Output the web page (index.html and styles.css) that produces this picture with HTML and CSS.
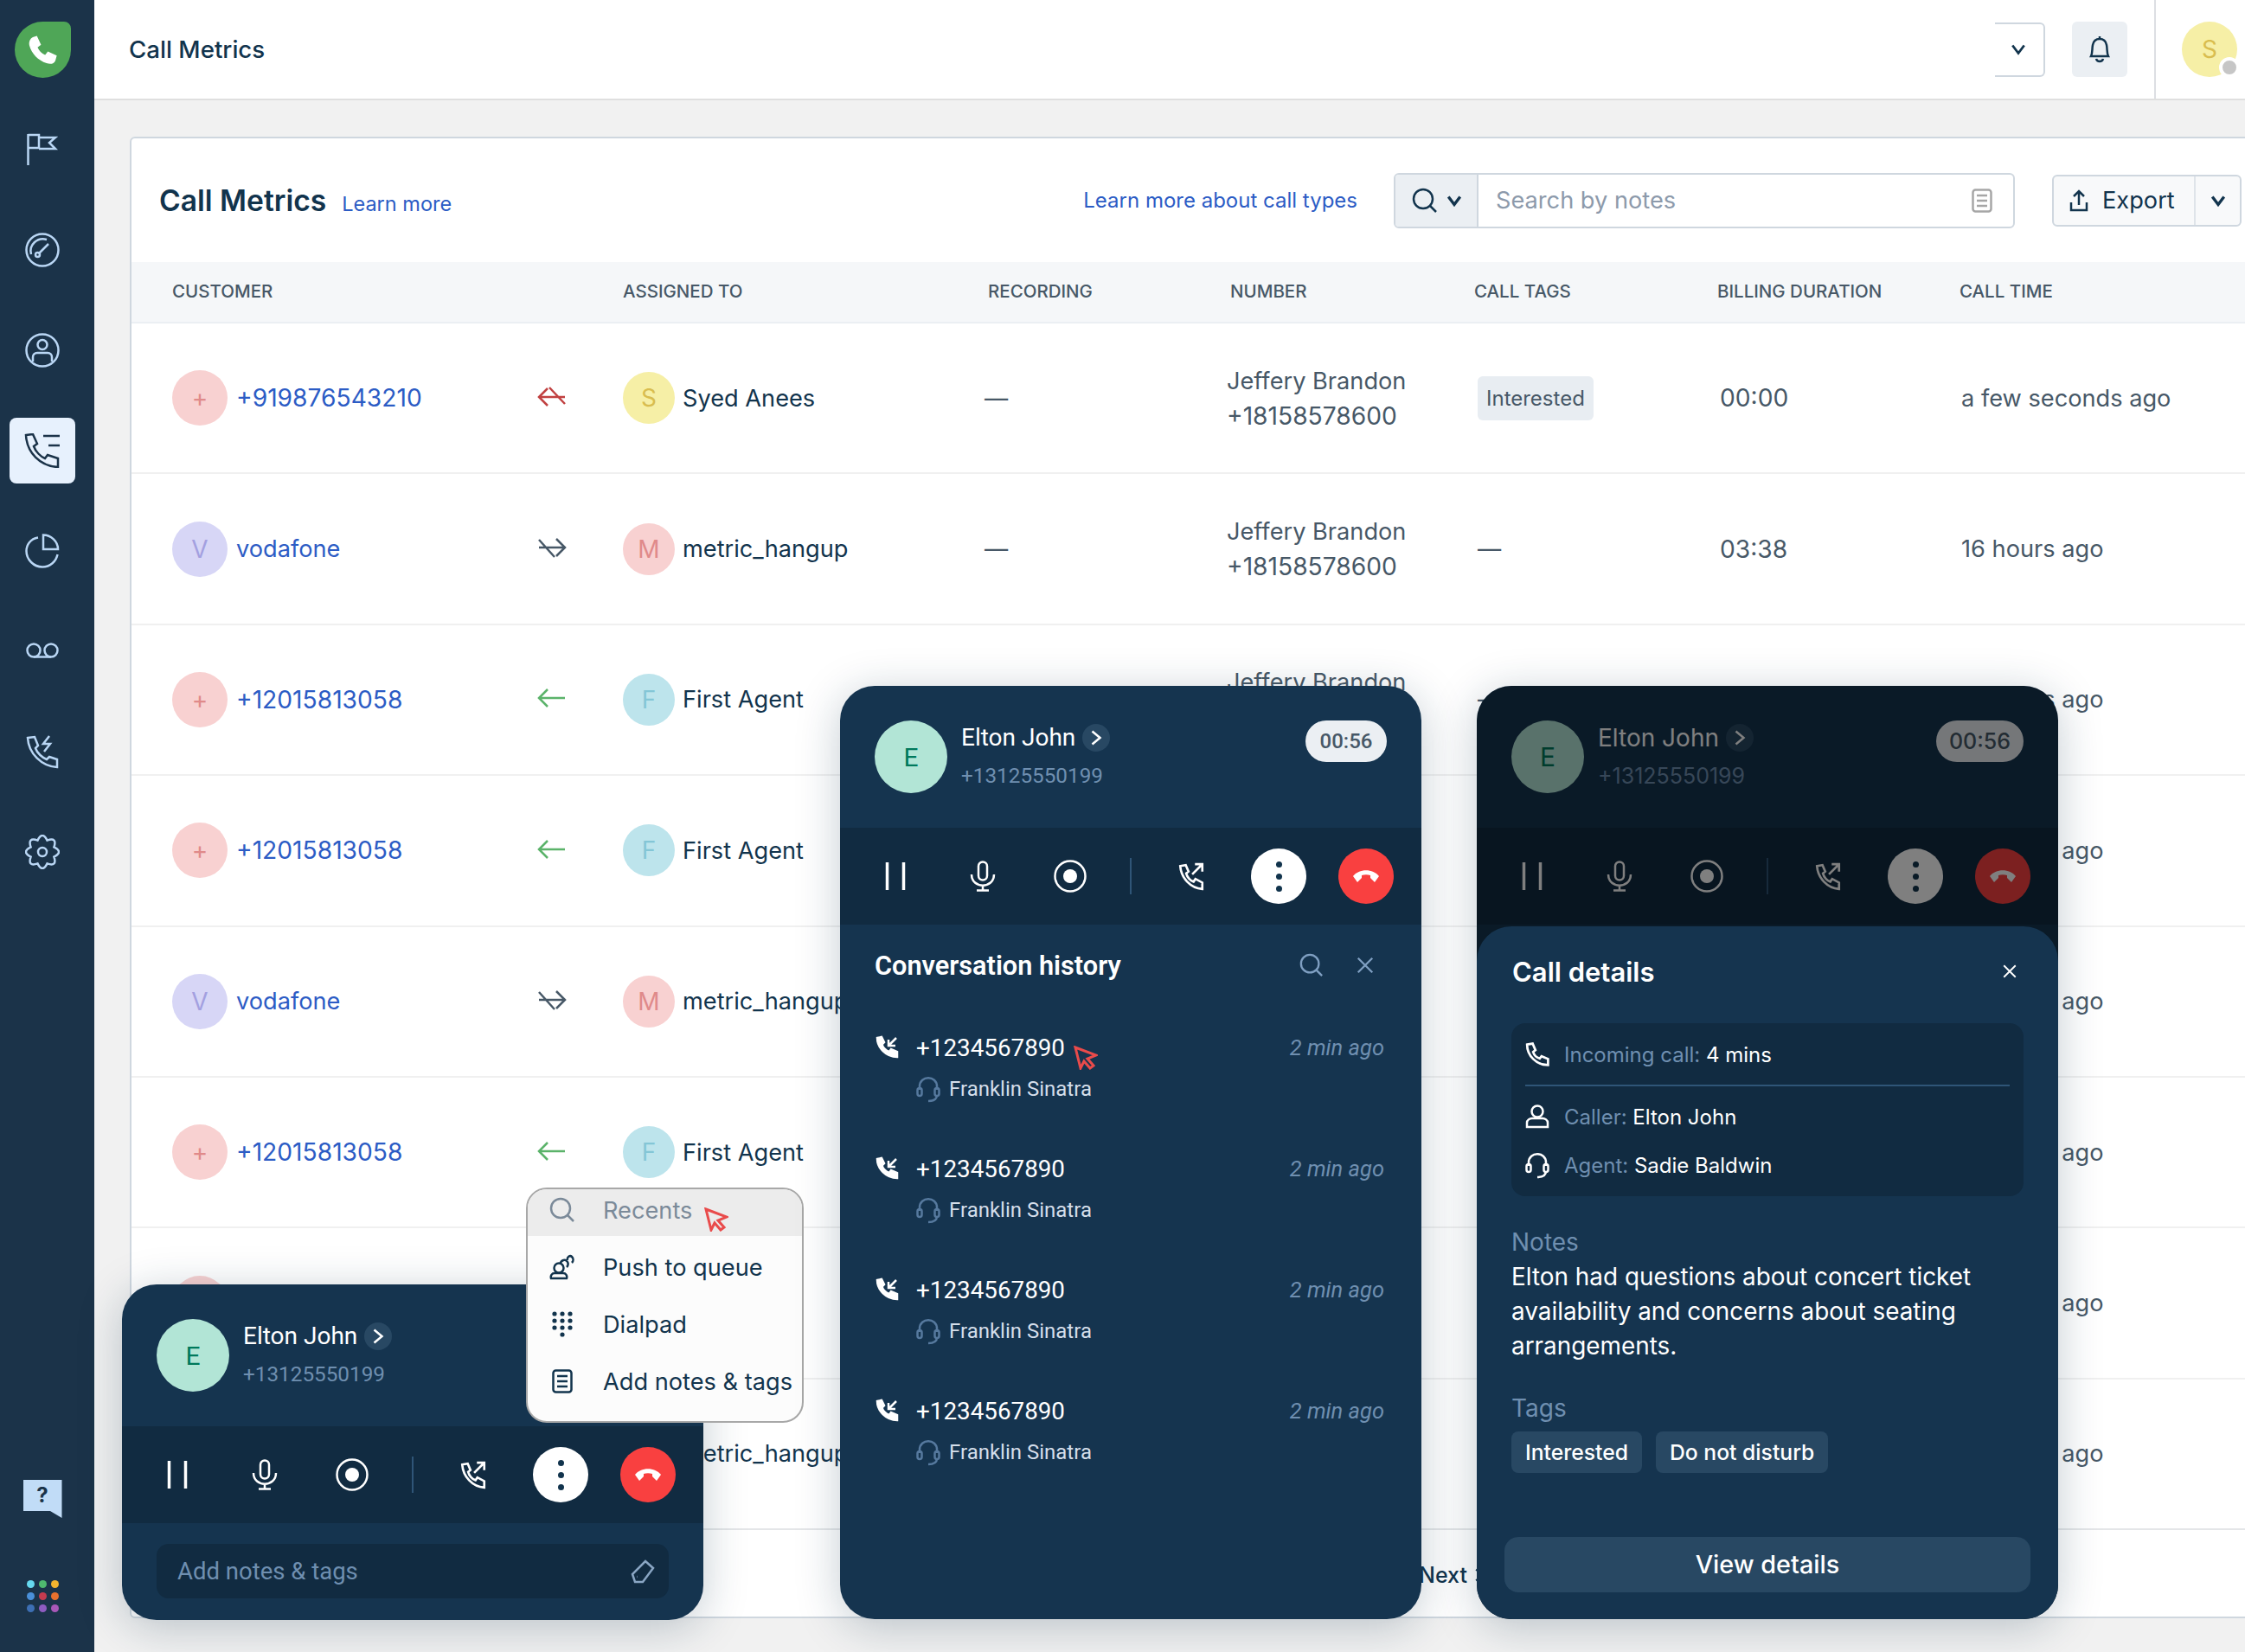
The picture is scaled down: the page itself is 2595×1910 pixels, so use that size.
FILE: index.html
```html
<!DOCTYPE html>
<html lang="en">
<head>
    <meta charset="UTF-8">
    <title>Call Metrics</title>
    <link rel="stylesheet" href="styles.css">
</head>
<body>
    <svg class="sprite" xmlns="http://www.w3.org/2000/svg">
        <symbol id="i-handset" viewBox="0 0 26 26"><path d="M2 2.500 8 1.500 11 8.500 8.500 10.500C9.500 13.500 12.500 16.500 15.500 17.500L17.500 15 24.500 18V24.500C12 24.500 2 14.500 2 2.500Z"/></symbol>
        <symbol id="i-transfer" viewBox="0 0 28 32"><path d="M2 5 8 4 11 11 8.500 13C9.500 17 13 21 16.500 22L18.500 19 26 23V30C13 29 3 18 2 5Z"/><path d="M15 14 25 4M18 3H26V11"/></symbol>
        <symbol id="i-incoming" viewBox="0 0 28 28"><path d="M3 3 8 2 11 8 8.500 10.500C9.500 14 13 18 17 19L19 16 26 19V25C13 25 3 14 3 3Z" fill="currentColor"/><path d="M25 3 16 12M16 5V12H24"/></symbol>
        <symbol id="i-hangup" viewBox="0 0 32 20"><path d="M1 10C8 1 24 1 31 10L26 17 21 12V9C18 8 14 8 11 9V12L6 17Z" fill="currentColor" stroke="none"/></symbol>
        <symbol id="i-mic" viewBox="0 0 30 36"><rect x="10" y="1.500" width="10" height="21" rx="5"/><path d="M2 16C2 33 28 33 28 16M15 28V34M8 34.500H22"/></symbol>
        <symbol id="i-search" viewBox="0 0 30 30"><circle cx="13" cy="13" r="11"/><path d="M21 21 28 28"/></symbol>
        <symbol id="i-close" viewBox="0 0 24 24"><path d="M3 3 21 21M21 3 3 21"/></symbol>
        <symbol id="i-chevron" viewBox="0 0 16 16"><path d="M2 4 8 12 14 4"/></symbol>
        <symbol id="i-headset" viewBox="0 0 28 32"><path d="M4 17V13C4 0 24 0 24 13V17M24 23C24 28 21 30 14 30"/><rect x="1.500" y="15" width="5" height="9" rx="2.500"/><rect x="21.500" y="15" width="5" height="9" rx="2.500"/></symbol>
        <symbol id="i-person" viewBox="0 0 28 28"><circle cx="14" cy="8" r="6.500"/><path d="M2 26V21C2 18 5 16 8 16H20C23 16 26 18 26 21V26Z"/></symbol>
        <symbol id="i-notes" viewBox="0 0 24 28"><rect x="1.500" y="1.500" width="21" height="25" rx="3"/><path d="M6 8H18M6 14H18M6 20H18"/></symbol>
        <symbol id="i-missed" viewBox="0 0 34 24"><path d="M32 12H2M12 2 2 12 12 22M14 1 32 20"/></symbol>
        <symbol id="i-outgoing" viewBox="0 0 34 24"><path d="M2 12H32M22 2 32 12 22 22M2 3 20 23"/></symbol>
        <symbol id="i-incoming-arrow" viewBox="0 0 34 24"><path d="M32 12H2M12 2 2 12 12 22"/></symbol>
        <symbol id="i-right" viewBox="0 0 14 18"><path d="M2.500 1.500 11.500 9 2.500 16.500"/></symbol>
    </svg>

    <div class="app">
        <aside class="sidebar">
            <div class="logo">
                <svg width="38" height="38" viewBox="0 0 24 24"><path d="M5 2.500 8 1.500 11 8 8.500 10C9.500 12.500 11.500 14.500 14 15.500L16 13 22.500 16 21.500 19.500C20.500 22 18 22.500 15 21.500 9 19.500 4 14.500 2.500 8.500 2 6 3 3.500 5 2.500Z"/></svg>
            </div>
            <nav class="nav">
                <a class="nav-item"><svg width="36" height="38" viewBox="0 0 36 38"><path d="M1.500 1V37M1.500 2H14V17H1.500M14 5H33L26 11 33 18H14"/></svg></a>
                <a class="nav-item"><svg width="40" height="40" viewBox="0 0 40 40"><circle cx="20" cy="20" r="18.500"/><path d="M7 25C4 14 14 5 25 8"/><path d="M15.500 24.500 27 13"/><circle cx="14.500" cy="25.500" r="2.500"/></svg></a>
                <a class="nav-item"><svg width="40" height="40" viewBox="0 0 40 40"><circle cx="20" cy="20" r="18.500"/><circle cx="20" cy="13.500" r="5.500"/><path d="M9 33V28C9 25 11 23 14 23H26C29 23 31 25 31 28V33"/></svg></a>
                <a class="nav-item active"><svg width="42" height="40" viewBox="0 0 42 40"><path d="M2 2 10 1 15 12 11 15C13 21 19 27 24 29L27 25 39 29V39C18 38 3 22 2 2Z"/><path d="M22 3H41M28 14H41"/></svg></a>
                <a class="nav-item"><svg width="40" height="40" viewBox="0 0 40 40"><path d="M15 4.500C6 6 1.500 13 1.500 20 1.500 30 10 38.500 20 38.500 29 38.500 36 32 37.500 24"/><path d="M21 1.500V18H38C38 9 30 1.500 21 1.500Z"/></svg></a>
                <a class="nav-item"><svg width="38" height="20" viewBox="0 0 38 20"><circle cx="9" cy="9" r="7.500"/><circle cx="29" cy="9" r="7.500"/><path d="M9 16.500H29"/></svg></a>
                <a class="nav-item"><svg width="38" height="40" viewBox="0 0 38 40"><path d="M2 4 10 3 14 13 11 16C13 22 19 27 24 29L27 26 36 29V38C18 37 3 22 2 4Z"/><path d="M27 2 20 11H28L21 20"/></svg></a>
                <a class="nav-item"><svg width="40" height="40" viewBox="0 0 40 40"><circle cx="20" cy="20" r="5"/><path d="M33.400 14.450Q44.600 20 33.400 25.550 37.400 37.400 25.550 33.400 20 44.600 14.450 33.400 2.600 37.400 6.600 25.550-4.600 20 6.600 14.450 2.600 2.600 14.450 6.600 20-4.600 25.550 6.600 37.400 2.600 33.400 14.450Z"/></svg></a>
            </nav>
            <div class="help">?</div>
            <div class="apps">
                <span class="dot teal"></span><span class="dot green"></span><span class="dot yellow"></span>
                <span class="dot blue"></span><span class="dot red"></span><span class="dot orange"></span>
                <span class="dot navy"></span><span class="dot violet"></span><span class="dot plum"></span>
            </div>
        </aside>

        <main class="main">
            <header class="topbar">
                <div class="page-title">Call Metrics</div>
                <div class="topbar-right">
                    <div class="drop-stub"><svg class="stroke-dark" width="18" height="18"><use href="#i-chevron"/></svg></div>
                    <div class="bell">
                        <svg class="stroke-dark" width="30" height="32" viewBox="0 0 30 32"><path d="M15 1V4M5 24C7 20 6 16 7 11 8 6 11 4 15 4S22 6 23 11C24 16 23 20 25 24Z"/><path d="M11 27C12 31 18 31 19 27"/></svg>
                    </div>
                    <div class="me">
                        <div class="avatar me-avatar yellow-tint">S<span class="status"></span></div>
                    </div>
                </div>
            </header>

            <section class="content">
                <div class="card">
                    <div class="card-head">
                        <h2>Call Metrics</h2>
                        <a class="link learn">Learn more</a>
                        <a class="link types">Learn more about call types</a>
                        <div class="search">
                            <div class="search-type">
                                <svg class="stroke-dark" width="30" height="30"><use href="#i-search"/></svg>
                                <svg class="stroke-dark thick" width="18" height="18"><use href="#i-chevron"/></svg>
                            </div>
                            <div class="search-box">
                                <span>Search by notes</span>
                                <svg class="stroke-grey" width="24" height="28"><use href="#i-notes"/></svg>
                            </div>
                        </div>
                        <div class="export">
                            <svg class="stroke-dark" width="22" height="26" viewBox="0 0 22 26"><path d="M11 18V2M5 8 11 2 17 8M2 15V24H20V15"/></svg>
                            <span class="export-label">Export</span>
                            <span class="export-more"><svg class="stroke-dark thick" width="18" height="18"><use href="#i-chevron"/></svg></span>
                        </div>
                    </div>

                    <div class="row row-head">
                        <div>Customer</div><div>Assigned to</div><div>Recording</div><div>Number</div><div>Call tags</div><div>Billing duration</div><div>Call time</div>
                    </div>

                    <div class="row">
                        <div class="customer"><span class="avatar big red-tint">+</span><a class="name num">+919876543210</a><svg class="dir dir-red" width="34" height="24"><use href="#i-missed"/></svg></div>
                        <div class="agent"><span class="avatar yellow-tint">S</span>Syed Anees</div>
                        <div class="muted"><span class="dash">—</span></div>
                        <div class="number">Jeffery Brandon<br><span class="num">+18158578600</span></div>
                        <div class="tags"><span class="tag">Interested</span></div>
                        <div class="muted dur num">00:00</div>
                        <div class="muted time">a few seconds ago</div>
                    </div>
                    <div class="row">
                        <div class="customer"><span class="avatar big violet-tint">V</span><a class="name">vodafone</a><svg class="dir dir-grey" width="34" height="24"><use href="#i-outgoing"/></svg></div>
                        <div class="agent"><span class="avatar pink-tint">M</span>metric_hangup</div>
                        <div class="muted"><span class="dash">—</span></div>
                        <div class="number">Jeffery Brandon<br><span class="num">+18158578600</span></div>
                        <div class="tags muted">—</div>
                        <div class="muted dur num">03:38</div>
                        <div class="muted time">16 hours ago</div>
                    </div>
                    <div class="row">
                        <div class="customer"><span class="avatar big red-tint">+</span><a class="name num">+12015813058</a><svg class="dir dir-green" width="34" height="24"><use href="#i-incoming-arrow"/></svg></div>
                        <div class="agent"><span class="avatar cyan-tint">F</span>First Agent</div>
                        <div class="muted"><span class="dash">—</span></div>
                        <div class="number">Jeffery Brandon<br><span class="num">+18158578600</span></div>
                        <div class="tags muted">—</div>
                        <div class="muted dur num">00:00</div>
                        <div class="muted time">16 hours ago</div>
                    </div>
                    <div class="row">
                        <div class="customer"><span class="avatar big red-tint">+</span><a class="name num">+12015813058</a><svg class="dir dir-green" width="34" height="24"><use href="#i-incoming-arrow"/></svg></div>
                        <div class="agent"><span class="avatar cyan-tint">F</span>First Agent</div>
                        <div class="muted"><span class="dash">—</span></div>
                        <div class="number">Jeffery Brandon<br><span class="num">+18158578600</span></div>
                        <div class="tags muted">—</div>
                        <div class="muted dur num">00:00</div>
                        <div class="muted time">16 hours ago</div>
                    </div>
                    <div class="row">
                        <div class="customer"><span class="avatar big violet-tint">V</span><a class="name">vodafone</a><svg class="dir dir-grey" width="34" height="24"><use href="#i-outgoing"/></svg></div>
                        <div class="agent"><span class="avatar pink-tint">M</span>metric_hangup</div>
                        <div class="muted"><span class="dash">—</span></div>
                        <div class="number">Jeffery Brandon<br><span class="num">+18158578600</span></div>
                        <div class="tags muted">—</div>
                        <div class="muted dur num">03:38</div>
                        <div class="muted time">16 hours ago</div>
                    </div>
                    <div class="row">
                        <div class="customer"><span class="avatar big red-tint">+</span><a class="name num">+12015813058</a><svg class="dir dir-green" width="34" height="24"><use href="#i-incoming-arrow"/></svg></div>
                        <div class="agent"><span class="avatar cyan-tint">F</span>First Agent</div>
                        <div class="muted"><span class="dash">—</span></div>
                        <div class="number">Jeffery Brandon<br><span class="num">+18158578600</span></div>
                        <div class="tags muted">—</div>
                        <div class="muted dur num">00:00</div>
                        <div class="muted time">16 hours ago</div>
                    </div>
                    <div class="row">
                        <div class="customer"><span class="avatar big red-tint">+</span><a class="name num">+12015813058</a><svg class="dir dir-green" width="34" height="24"><use href="#i-incoming-arrow"/></svg></div>
                        <div class="agent"><span class="avatar cyan-tint">F</span>First Agent</div>
                        <div class="muted"><span class="dash">—</span></div>
                        <div class="number">Jeffery Brandon<br><span class="num">+18158578600</span></div>
                        <div class="tags muted">—</div>
                        <div class="muted dur num">00:00</div>
                        <div class="muted time">16 hours ago</div>
                    </div>
                    <div class="row">
                        <div class="customer"><span class="avatar big violet-tint">V</span><a class="name">vodafone</a><svg class="dir dir-grey" width="34" height="24"><use href="#i-outgoing"/></svg></div>
                        <div class="agent"><span class="avatar pink-tint">M</span>metric_hangup</div>
                        <div class="muted"><span class="dash">—</span></div>
                        <div class="number">Jeffery Brandon<br><span class="num">+18158578600</span></div>
                        <div class="tags muted">—</div>
                        <div class="muted dur num">03:38</div>
                        <div class="muted time">16 hours ago</div>
                    </div>

                    <div class="card-foot">Next<svg class="next-arrow" width="12" height="16"><use href="#i-right"/></svg></div>
                </div>
            </section>
        </main>
    </div>

    <!-- small dialer -->
    <div class="dialer dialer-small">
        <div class="dialer-top">
            <span class="avatar caller">E</span>
            <div class="caller-info">
                <div class="caller-name">Elton John <span class="pill-arrow"><svg width="14" height="18"><use href="#i-right"/></svg></span></div>
                <div class="caller-phone">+13125550199</div>
            </div>
        </div>
        <div class="controls">
            <span class="ctl"><svg class="pause" width="24" height="36" viewBox="0 0 24 36"><path d="M2.500 2V34M21.500 2V34"/></svg></span>
            <span class="ctl"><svg width="30" height="36"><use href="#i-mic"/></svg></span>
            <span class="ctl"><svg width="38" height="38" viewBox="0 0 38 38"><circle cx="19" cy="19" r="17.500"/><circle cx="19" cy="19" r="8" class="solid"/></svg></span>
            <span class="ctl-line"></span>
            <span class="ctl"><svg width="30" height="34"><use href="#i-transfer"/></svg></span>
            <span class="ctl ctl-more"><i></i><i></i><i></i></span>
            <span class="ctl ctl-end"><svg width="34" height="20"><use href="#i-hangup"/></svg></span>
        </div>
        <div class="note-input">
            <span>Add notes &amp; tags</span>
            <svg class="note-tag" width="28" height="28" viewBox="0 0 28 28"><path d="M17 2 26 10 14 26H5L2 17ZM7 20H7.500"/></svg>
        </div>
    </div>

    <!-- more menu -->
    <div class="menu">
        <div class="menu-item hover"><svg class="stroke-grey2" width="30" height="30"><use href="#i-search"/></svg><span>Recents</span></div>
        <div class="menu-item"><svg class="stroke-dark" width="30" height="30" viewBox="0 0 30 30"><circle cx="11" cy="16" r="5.500"/><path d="M2 28C1 25 3 22 6 22H16C19 22 21 25 20 28ZM13 11C13 7 19 5 21 9 22 11 22 13 20 15M21 7C20 3 24 1 26 3 28 5 28 8 26 10"/></svg><span>Push to queue</span></div>
        <div class="menu-item"><svg class="fill-dark" width="26" height="32" viewBox="0 0 26 32"><circle cx="4" cy="4" r="2.600"/><circle cx="13" cy="4" r="2.600"/><circle cx="22" cy="4" r="2.600"/><circle cx="4" cy="12" r="2.600"/><circle cx="13" cy="12" r="2.600"/><circle cx="22" cy="12" r="2.600"/><circle cx="4" cy="20" r="2.600"/><circle cx="13" cy="20" r="2.600"/><circle cx="22" cy="20" r="2.600"/><circle cx="13" cy="28" r="2.600"/></svg><span>Dialpad</span></div>
        <div class="menu-item"><svg class="stroke-dark" width="24" height="28"><use href="#i-notes"/></svg><span>Add notes &amp; tags</span></div>
    </div>
    <svg class="cursor cursor-menu" width="28" height="28" viewBox="0 0 28 28"><path d="M2 2 26 11 16 15 23 23 19 26 12 18 8 26Z"/></svg>

    <!-- conversation history -->
    <div class="dialer dialer-history">
        <div class="dialer-top">
            <span class="avatar caller">E</span>
            <div class="caller-info">
                <div class="caller-name">Elton John <span class="pill-arrow"><svg width="14" height="18"><use href="#i-right"/></svg></span></div>
                <div class="caller-phone">+13125550199</div>
            </div>
            <span class="timer">00:56</span>
        </div>
        <div class="controls">
            <span class="ctl"><svg class="pause" width="24" height="36" viewBox="0 0 24 36"><path d="M2.500 2V34M21.500 2V34"/></svg></span>
            <span class="ctl"><svg width="30" height="36"><use href="#i-mic"/></svg></span>
            <span class="ctl"><svg width="38" height="38" viewBox="0 0 38 38"><circle cx="19" cy="19" r="17.500"/><circle cx="19" cy="19" r="8" class="solid"/></svg></span>
            <span class="ctl-line"></span>
            <span class="ctl"><svg width="30" height="34"><use href="#i-transfer"/></svg></span>
            <span class="ctl ctl-more"><i></i><i></i><i></i></span>
            <span class="ctl ctl-end"><svg width="34" height="20"><use href="#i-hangup"/></svg></span>
        </div>
        <div class="history">
            <div class="history-head">
                <span>Conversation history</span>
                <svg class="hist-search" width="28" height="28"><use href="#i-search"/></svg>
                <svg class="hist-close" width="22" height="22"><use href="#i-close"/></svg>
            </div>
            <div class="history-row">
                <svg class="hist-call" width="28" height="28"><use href="#i-incoming"/></svg>
                <span class="hist-num">+1234567890</span>
                <span class="hist-time">2 min ago</span>
                <div class="hist-agent"><svg width="28" height="32"><use href="#i-headset"/></svg>Franklin Sinatra</div>
            </div>
            <div class="history-row">
                <svg class="hist-call" width="28" height="28"><use href="#i-incoming"/></svg>
                <span class="hist-num">+1234567890</span>
                <span class="hist-time">2 min ago</span>
                <div class="hist-agent"><svg width="28" height="32"><use href="#i-headset"/></svg>Franklin Sinatra</div>
            </div>
            <div class="history-row">
                <svg class="hist-call" width="28" height="28"><use href="#i-incoming"/></svg>
                <span class="hist-num">+1234567890</span>
                <span class="hist-time">2 min ago</span>
                <div class="hist-agent"><svg width="28" height="32"><use href="#i-headset"/></svg>Franklin Sinatra</div>
            </div>
            <div class="history-row">
                <svg class="hist-call" width="28" height="28"><use href="#i-incoming"/></svg>
                <span class="hist-num">+1234567890</span>
                <span class="hist-time">2 min ago</span>
                <div class="hist-agent"><svg width="28" height="32"><use href="#i-headset"/></svg>Franklin Sinatra</div>
            </div>
        </div>
    </div>
    <svg class="cursor cursor-history" width="28" height="28" viewBox="0 0 28 28"><path d="M2 2 26 11 16 15 23 23 19 26 12 18 8 26Z"/></svg>

    <!-- call details -->
    <div class="dialer dialer-details">
        <div class="dialer-top">
            <span class="avatar caller">E</span>
            <div class="caller-info">
                <div class="caller-name">Elton John <span class="pill-arrow"><svg width="14" height="18"><use href="#i-right"/></svg></span></div>
                <div class="caller-phone">+13125550199</div>
            </div>
            <span class="timer">00:56</span>
        </div>
        <div class="controls">
            <span class="ctl"><svg class="pause" width="24" height="36" viewBox="0 0 24 36"><path d="M2.500 2V34M21.500 2V34"/></svg></span>
            <span class="ctl"><svg width="30" height="36"><use href="#i-mic"/></svg></span>
            <span class="ctl"><svg width="38" height="38" viewBox="0 0 38 38"><circle cx="19" cy="19" r="17.500"/><circle cx="19" cy="19" r="8" class="solid"/></svg></span>
            <span class="ctl-line"></span>
            <span class="ctl"><svg width="30" height="34"><use href="#i-transfer"/></svg></span>
            <span class="ctl ctl-more"><i></i><i></i><i></i></span>
            <span class="ctl ctl-end"><svg width="34" height="20"><use href="#i-hangup"/></svg></span>
        </div>
        <div class="dim"></div>
        <div class="sheet">
            <div class="sheet-head">
                <span>Call details</span>
                <svg width="18" height="18"><use href="#i-close"/></svg>
            </div>
            <div class="detail-box">
                <div class="detail-row"><svg width="28" height="28"><use href="#i-handset"/></svg><span><em>Incoming call:</em> 4 mins</span></div>
                <div class="detail-line"></div>
                <div class="detail-row"><svg width="28" height="28"><use href="#i-person"/></svg><span><em>Caller:</em> Elton John</span></div>
                <div class="detail-row agent-row"><svg width="28" height="32"><use href="#i-headset"/></svg><span><em>Agent:</em> Sadie Baldwin</span></div>
            </div>
            <div class="sheet-label notes-label">Notes</div>
            <p class="sheet-notes">Elton had questions about concert ticket availability and concerns about seating arrangements.</p>
            <div class="sheet-label tags-label">Tags</div>
            <div class="chips"><span class="chip">Interested</span><span class="chip">Do not disturb</span></div>
            <a class="view-btn">View details</a>
        </div>
    </div>
</body>
</html>
```

FILE: styles.css
```css
* {
    margin: 0;
    padding: 0;
    box-sizing: border-box;
}

body {
    font-family: Inter, 'Noto Sans', sans-serif;
    background-color: #f1f1f1;
    color: #12344d;
    width: 2595px;
    height: 1910px;
    overflow: hidden;
    position: relative;
    font-size: 27.2px;
}

.sprite {
    position: absolute;
    width: 0;
    height: 0;
}

svg {
    fill: none;
    stroke: currentColor;
    stroke-width: 2.5;
    flex-shrink: 0;
}

.stroke-dark { color: #12344d; }
.stroke-grey { color: #a6a6a6; }
.stroke-grey2 { color: #7b8a99; }
.fill-dark { fill: #12344d; stroke: none; }
.thick { stroke-width: 3; }
.num { font-size: 28.2px; }

.app {
    display: flex;
    height: 100%;
}

/* sidebar */
.sidebar {
    width: 109px;
    flex-shrink: 0;
    background-color: #1b3349;
    display: flex;
    flex-direction: column;
    align-items: center;
    padding: 25px 11px 46px 0;
}

.logo {
    width: 65px;
    height: 65px;
    background-color: #4fa657;
    border-radius: 50% 8px 50% 50%;
    display: flex;
    align-items: center;
    justify-content: center;
}

.logo path {
    fill: #fff;
    stroke: none;
}

.nav {
    display: flex;
    flex-direction: column;
    align-items: center;
    margin-top: 45px;
}

.nav-item {
    width: 76px;
    height: 76px;
    margin-bottom: 40px;
    border-radius: 8px;
    color: #b9d6f4;
    display: flex;
    align-items: center;
    justify-content: center;
}

.nav-item.active {
    background-color: #e7f1fd;
    color: #1b3349;
}

.help {
    width: 45px;
    height: 44px;
    margin-top: auto;
    background-color: #c1dcf7;
    color: #1b3349;
    font-size: 24px;
    font-weight: 700;
    text-align: center;
    line-height: 36px;
    clip-path: polygon(0 0, 100% 0, 100% 100%, 70% 82%, 0 82%);
}

.apps {
    margin-top: 72px;
    display: grid;
    grid-template-columns: repeat(3, 9px);
    gap: 5px 5px;
}

.dot {
    width: 9px;
    height: 9px;
    border-radius: 50%;
}

.teal { background-color: #66d9ef; }
.green { background-color: #4fb96f; }
.yellow { background-color: #f4b52f; }
.blue { background-color: #4a90d9; }
.red { background-color: #c43b4f; }
.orange { background-color: #e8712e; }
.navy { background-color: #3d6fb4; }
.violet { background-color: #8e5cc0; }
.plum { background-color: #a958b8; }

/* top bar */
.main {
    flex: 1;
    min-width: 0;
}

.topbar {
    height: 116px;
    background-color: #fff;
    border-bottom: 2px solid #dfdfdf;
    display: flex;
    align-items: center;
    padding-left: 40px;
}

.page-title {
    font-size: 27.7px;
    font-weight: 500;
}

.topbar-right {
    margin-left: auto;
    display: flex;
    align-items: center;
    height: 100%;
}

.drop-stub {
    width: 58px;
    height: 63px;
    border: 2px solid #cfd7df;
    border-left: none;
    border-radius: 0 6px 6px 0;
    display: flex;
    align-items: center;
    justify-content: center;
    padding-right: 3px;
}

.bell {
    width: 64px;
    height: 64px;
    margin-left: 31px;
    background-color: #ebeff3;
    border-radius: 6px;
    display: flex;
    align-items: center;
    justify-content: center;
}

.me {
    height: 100%;
    width: 105px;
    margin-left: 31px;
    padding-left: 30px;
    border-left: 2px solid #dcdfe3;
    display: flex;
    align-items: center;
}

/* avatars */
.avatar {
    width: 60px;
    height: 60px;
    border-radius: 50%;
    flex-shrink: 0;
    font-size: 28px;
    display: inline-flex;
    align-items: center;
    justify-content: center;
    position: relative;
}

.avatar.big { width: 64px; height: 64px; }
.me-avatar { width: 64px; height: 64px; }

.red-tint { background-color: #f8d1d1; color: #e08a8a; }
.violet-tint { background-color: #d7d6f6; color: #a3a0e0; }
.yellow-tint { background-color: #f6efa6; color: #d9bd4f; }
.pink-tint { background-color: #f8d1d1; color: #e08a8a; }
.cyan-tint { background-color: #bde4ec; color: #84c6d6; }

.status {
    position: absolute;
    right: -3px;
    bottom: -1px;
    width: 24px;
    height: 24px;
    background-color: #c6c6c6;
    border: 4px solid #fff;
    border-radius: 50%;
}

/* card */
.content {
    padding: 42px 0 0 41px;
}

.card {
    width: 2600px;
    height: 1713px;
    background-color: #fff;
    border: 2px solid #cfd7df;
    border-radius: 6px;
    overflow: hidden;
}

.card-head {
    height: 143px;
    padding: 0 157px 0 32px;
    display: flex;
    align-items: center;
}

.card-head h2 {
    font-size: 33.6px;
    font-weight: 600;
}

.link {
    color: #2c5cc5;
    font-size: 24px;
}

.learn {
    margin-left: 18px;
    margin-top: 8px;
    font-size: 23.5px;
}

.types {
    margin-left: auto;
}

.search {
    margin-left: 42px;
    width: 718px;
    height: 64px;
    border: 2px solid #cfd7df;
    border-radius: 6px;
    display: flex;
    overflow: hidden;
}

.search-type {
    width: 96px;
    background-color: #ebeff3;
    border-right: 2px solid #cfd7df;
    display: flex;
    align-items: center;
    gap: 10px;
    padding-left: 19px;
}

.search-box {
    flex: 1;
    display: flex;
    align-items: center;
    justify-content: space-between;
    padding: 0 24px 0 20px;
    color: #8d9aab;
}

.export {
    margin-left: 43px;
    width: 219px;
    height: 60px;
    border: 2px solid #cfd7df;
    border-radius: 6px;
    background-color: #f8f9fa;
    display: flex;
    align-items: center;
    padding-left: 18px;
}

.export-label {
    margin-left: 16px;
    width: 91px;
}

.export-more {
    width: 53px;
    height: 100%;
    margin-left: 15px;
    border-left: 2px solid #dfe4e9;
    display: flex;
    align-items: center;
    justify-content: center;
}

/* table */
.row {
    height: 174.4px;
    padding-left: 47px;
    display: grid;
    grid-template-columns: 521px 422px 280px 282px 281px 280px 500px;
    align-items: center;
    border-bottom: 2px solid #f0f0f0;
}

.row-head {
    height: 71px;
    padding-bottom: 2px;
    background-color: #f5f7f9;
    border-bottom: 2px solid #ebeff3;
    font-size: 20.5px;
    font-weight: 500;
    color: #475867;
    text-transform: uppercase;
}

.customer {
    display: flex;
    align-items: center;
}

.name {
    width: 348px;
    margin-left: 10px;
    color: #2c5cc5;
}

.dir {
    margin-top: -3px;
}

.dir-red { color: #c14141; }
.dir-grey { color: #475867; }
.dir-green { color: #5bb36a; }

.agent {
    display: flex;
    align-items: center;
    gap: 9px;
}

.muted {
    color: #475867;
}

.dash {
    margin-left: -4px;
}

.number {
    margin-left: -4px;
    padding-top: 2px;
    line-height: 40px;
    color: #475867;
}

.tags {
    margin-left: 4px;
}

.tag {
    display: inline-block;
    padding: 0 10px;
    line-height: 51px;
    border-radius: 6px;
    background-color: #e8edf2;
    font-size: 24px;
    color: #475867;
}

.dur {
    margin-left: 3px;
}

.time {
    margin-left: 2px;
}

.card-foot {
    height: 103px;
    padding-left: 1488px;
    padding-top: 3px;
    display: flex;
    align-items: center;
    color: #12344d;
    font-size: 25px;
    font-weight: 500;
    border-top: 2px solid #e4e6e8;
    margin-top: -2px;
}

.next-arrow {
    margin-left: 8px;
}

/* dialer windows */
.dialer {
    position: absolute;
    width: 672px;
    background-color: #15344f;
    border-radius: 40px;
    overflow: hidden;
    color: #fff;
    font-size: 28px;
    box-shadow: 0 8px 50px rgba(18, 52, 77, 0.25);
}

.dialer-small,
.dialer-history {
    font-family: Roboto, sans-serif;
}

.dialer-small {
    left: 141px;
    top: 1485px;
    height: 388px;
}

.dialer-history {
    left: 971px;
    top: 793px;
    height: 1079px;
}

.dialer-details {
    left: 1707px;
    top: 793px;
    height: 1079px;
}

.dialer-top {
    height: 164px;
    padding: 40px 40px 0;
    display: flex;
    align-items: flex-start;
}

.caller {
    width: 84px;
    height: 84px;
    background-color: #b2e5d6;
    color: #00795b;
    font-size: 30px;
}

.caller-info {
    margin-left: 16px;
    display: flex;
    flex-direction: column;
    gap: 4px;
}

.caller-name {
    line-height: 40px;
    display: flex;
    align-items: center;
    gap: 8px;
}

.pill-arrow {
    width: 32px;
    height: 32px;
    background-color: #284863;
    border-radius: 50%;
    display: inline-flex;
    align-items: center;
    justify-content: center;
}

.caller-phone {
    line-height: 40px;
    font-size: 24.3px;
    color: #6f8fb0;
}

.timer {
    margin-left: auto;
    width: 94px;
    height: 48px;
    background-color: #ebeff3;
    border-radius: 24px;
    color: #475867;
    font-size: 24px;
    font-weight: 500;
    text-align: center;
    line-height: 48px;
}

.dialer-details .caller-phone { font-size: 25px; }
.dialer-details .timer { width: 101px; font-size: 25px; }

.controls {
    height: 112px;
    background-color: #112b41;
    padding-left: 32px;
    display: flex;
    align-items: center;
    gap: 37px;
}

.ctl {
    width: 64px;
    height: 64px;
    border-radius: 50%;
    display: flex;
    align-items: center;
    justify-content: center;
}

.ctl .pause {
    stroke-width: 3.5;
}

.ctl .solid {
    fill: #fff;
    stroke: none;
}

.ctl-line {
    width: 2px;
    height: 42px;
    background-color: #2f5577;
}

.ctl-more {
    background-color: #fff;
    flex-direction: column;
    gap: 7px;
}

.ctl-more i {
    width: 7px;
    height: 7px;
    border-radius: 50%;
    background-color: #12344d;
}

.ctl-end {
    background-color: #f94040;
}

.note-input {
    margin: 24px 40px 0;
    height: 63px;
    padding: 0 16px 0 24px;
    background-color: #112b41;
    border-radius: 14px;
    display: flex;
    align-items: center;
    justify-content: space-between;
    color: #6f8fb0;
    font-size: 27.5px;
}

.note-tag {
    color: #8aa6c4;
}

/* menu */
.menu {
    position: absolute;
    left: 608px;
    top: 1373px;
    width: 321px;
    height: 272px;
    background-color: #fcfcfc;
    border: 2px solid #a8a8a8;
    border-radius: 24px;
    overflow: hidden;
}

.menu-item {
    height: 66px;
    padding-left: 25px;
    display: flex;
    align-items: center;
}

.menu-item svg {
    width: 30px;
}

.menu-item span {
    margin-left: 32px;
}

.menu-item.hover {
    height: 54px;
    padding-bottom: 6px;
    background-color: #ececec;
    color: #7b8a99;
    margin-bottom: 3px;
}

.cursor {
    position: absolute;
    fill: none;
    stroke: #e94b4b;
    stroke-width: 3;
}

.cursor-menu { left: 814px; top: 1396px; }
.cursor-history { left: 1241px; top: 1209px; }

/* history */
.history {
    padding: 27px 40px 0;
}

.history-head {
    height: 40px;
    font-size: 30.7px;
    font-weight: 600;
    display: flex;
    align-items: center;
}

.hist-search {
    margin-left: auto;
    color: #7f9fc2;
}

.hist-close {
    margin-left: 37px;
    margin-right: 14px;
    color: #7f9fc2;
}

.history-row {
    position: relative;
    height: 88px;
    margin-top: 52px;
    padding-left: 48px;
    display: grid;
    grid-template-columns: 1fr auto;
    grid-template-rows: 40px 40px;
    row-gap: 8px;
    align-items: center;
}

.history-head + .history-row {
    margin-top: 55px;
}

.hist-call {
    position: absolute;
    left: 0;
    top: 6px;
    color: #fff;
}

.hist-num {
    font-size: 27.8px;
}

.hist-time {
    font-style: italic;
    font-size: 25.5px;
    color: #6f8fb0;
    margin-right: 3px;
}

.hist-agent {
    grid-column: 1 / 3;
    font-size: 24px;
    color: #d4deea;
    display: flex;
    align-items: center;
    gap: 10px;
}

.hist-agent svg {
    color: #56799e;
}

/* details */
.dim {
    position: absolute;
    inset: 0;
    background-color: rgba(0, 0, 0, 0.5);
}

.sheet {
    position: absolute;
    left: 0;
    right: 0;
    top: 278px;
    bottom: 0;
    background-color: #15344f;
    border-radius: 40px 40px 0 0;
    padding: 32px 40px 31px;
    display: flex;
    flex-direction: column;
}

.sheet-head {
    height: 40px;
    font-size: 31px;
    font-weight: 600;
    display: flex;
    align-items: center;
    justify-content: space-between;
    padding-left: 1px;
    padding-right: 7px;
}

.detail-box {
    margin-top: 40px;
    height: 200px;
    padding: 18px 16px;
    background-color: #112b41;
    border-radius: 16px;
}

.detail-row {
    height: 36px;
    display: flex;
    align-items: center;
    gap: 17px;
    font-size: 24px;
}

.detail-row em {
    font-style: normal;
    color: #6f8fb0;
}

.detail-line {
    margin: 17px 0;
    height: 2px;
    background-color: #2f5577;
}

.agent-row {
    margin-top: 20px;
}

.sheet-label {
    line-height: 40px;
    color: #6f8fb0;
    font-size: 28px;
}

.notes-label {
    margin-top: 33px;
}

.sheet-notes {
    line-height: 40px;
    font-size: 27.9px;
}

.tags-label {
    margin-top: 32px;
}

.chips {
    margin-top: 7px;
    display: flex;
    gap: 16px;
}

.chip {
    height: 48px;
    padding: 0 16px;
    line-height: 48px;
    background-color: #284863;
    border-radius: 8px;
    font-size: 24.7px;
    font-weight: 500;
}

.view-btn {
    margin: auto -8px 0;
    height: 64px;
    background-color: #284863;
    border-radius: 16px;
    font-size: 28.8px;
    font-weight: 500;
    text-align: center;
    line-height: 64px;
}
```
